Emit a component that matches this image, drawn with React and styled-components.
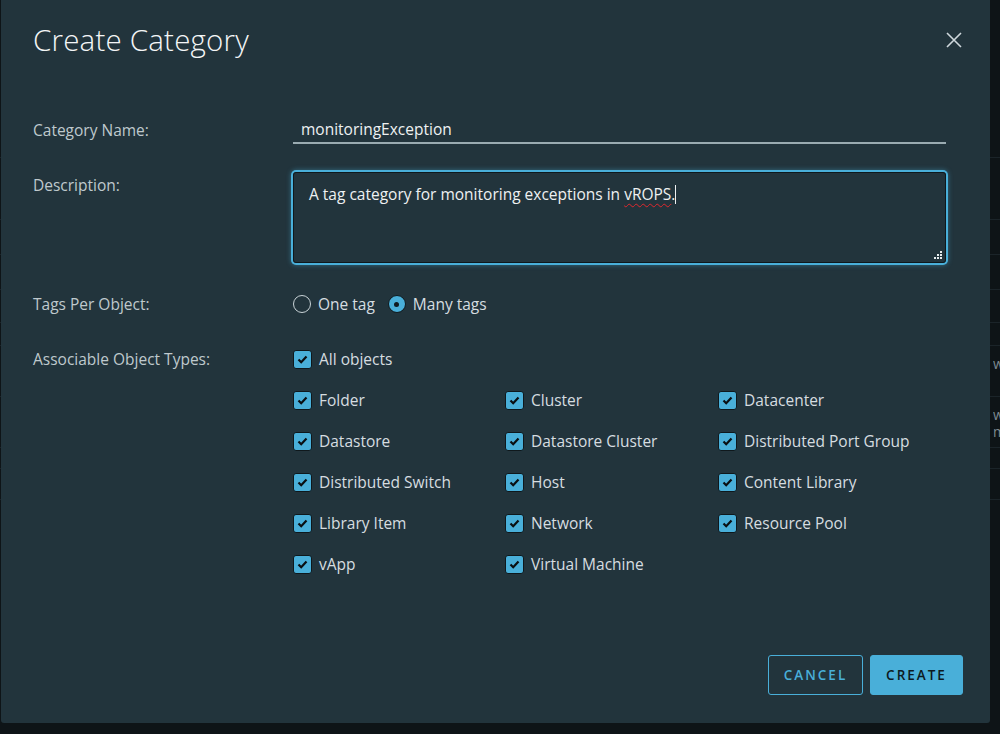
import React from 'react';
import styled, { createGlobalStyle } from 'styled-components';

const GlobalStyle = createGlobalStyle`
  html, body {
    margin: 0;
    padding: 0;
    background: #0e1417;
  }
  body {
    font-family: "Open Sans", "Noto Sans", sans-serif;
  }
`;

const Page = styled.div`
  position: relative;
  width: 1000px;
  height: 734px;
  overflow: hidden;
  background: #0e1417;
`;

const Backdrop = styled.div`
  display: flex;
  flex-direction: column;
  padding-top: 157px;
`;

const BackRow = styled.div`
  display: grid;
  grid-template-columns: 993px 1fr;
  height: ${props => props.h || 34}px;
  border-top: 1px solid #1b2429;
  color: #7d8a90;
  font-size: 14px;
  line-height: 17px;
  white-space: nowrap;
`;

const BackCell = styled.div`
  padding-top: 9px;
  overflow: hidden;
`;

const Modal = styled.div`
  position: absolute;
  left: 1px;
  top: 0;
  width: 989px;
  height: 723px;
  background: #22343c;
  border-radius: 0 0 3px 3px;
  display: flex;
  flex-direction: column;
  box-sizing: border-box;
`;

const Header = styled.div`
  display: flex;
  align-items: center;
  justify-content: space-between;
  padding: 20px 28px 0 32px;
`;

const Title = styled.h1`
  margin: 0;
  font-size: 29.5px;
  line-height: 40px;
  font-weight: 300;
  color: #f4f6f7;
  letter-spacing: 0.2px;
`;

const CloseButton = styled.button`
  background: none;
  border: none;
  padding: 0;
  width: 16px;
  height: 16px;
  cursor: pointer;
  display: flex;
`;

const Body = styled.div`
  display: flex;
  flex-direction: column;
  padding: 0 44px 0 32px;
`;

const FormRow = styled.div`
  display: flex;
  align-items: ${props => props.top ? 'flex-start' : 'center'};
  margin-top: ${props => props.mt}px;
`;

const Label = styled.label`
  width: 260px;
  flex: none;
  font-size: 15.5px;
  line-height: ${props => props.lh || 26}px;
  color: #bfc9cd;
`;

const TextInput = styled.div`
  flex: 1;
  height: 26px;
  line-height: 26px;
  padding-left: 8px;
  font-size: 15.5px;
  color: #eef1f2;
  border-bottom: 2px solid #9aabb1;
`;

const TextArea = styled.div`
  position: relative;
  flex: 1;
  height: 91px;
  box-sizing: border-box;
  border: 1px solid #0f181c;
  border-radius: 3px;
  box-shadow: 0 0 0 2px #49afd9, 0 0 5px 2px rgba(73, 175, 217, 0.45);
  padding: 8px 15px;
  font-size: 15.5px;
  line-height: 26px;
  color: #eef1f2;
`;

const Misspelled = styled.span`
  text-decoration: underline wavy #e0282e;
  text-decoration-thickness: 1px;
  text-underline-offset: 3px;
`;

const Caret = styled.span`
  display: inline-block;
  width: 1px;
  height: 19px;
  background: #eef1f2;
  vertical-align: -4px;
`;

const Grip = styled.svg`
  position: absolute;
  right: 3px;
  bottom: 3px;
`;

const Options = styled.div`
  display: flex;
  align-items: center;
  gap: 13px;
`;

const Choice = styled.div`
  display: flex;
  align-items: center;
  gap: 7px;
  height: 20px;
  font-size: 15.5px;
  color: #d6dde0;
  white-space: nowrap;
`;

const Radio = styled.span`
  width: 18px;
  height: 18px;
  box-sizing: border-box;
  border-radius: 50%;
  flex: none;
  display: flex;
  align-items: center;
  justify-content: center;
  border: ${props => props.checked ? '1px solid #0f181c' : '1.5px solid #c9d3d7'};
  background: ${props => props.checked ? '#49afd9' : 'transparent'};
  &::after {
    content: '';
    display: ${props => props.checked ? 'block' : 'none'};
    width: 5px;
    height: 5px;
    border-radius: 50%;
    background: #0f1a20;
  }
`;

const Box = styled.span`
  width: 19px;
  height: 19px;
  box-sizing: border-box;
  flex: none;
  border-radius: 3px;
  border: 1px solid #0f181c;
  background: #49afd9;
  display: flex;
  align-items: center;
  justify-content: center;
`;

const TypesColumn = styled.div`
  display: flex;
  flex-direction: column;
  gap: 21px;
`;

const TypesGrid = styled.div`
  display: grid;
  grid-template-columns: 212px 213px 1fr;
  row-gap: 21px;
`;

const Footer = styled.div`
  margin-top: auto;
  display: flex;
  justify-content: flex-end;
  gap: 7px;
  padding: 0 27px 28px 0;
`;

const Button = styled.button`
  height: 40px;
  box-sizing: border-box;
  padding: 0 14px;
  min-width: ${props => props.primary ? 93 : 95}px;
  border-radius: 3px;
  border: 1px solid #49afd9;
  background: ${props => props.primary ? '#49afd9' : 'transparent'};
  color: ${props => props.primary ? '#0d1a21' : '#49afd9'};
  font-family: "Open Sans", sans-serif;
  font-size: 13.5px;
  font-weight: 600;
  letter-spacing: 2px;
  cursor: pointer;
`;

const Check = () => (
  <Box>
    <svg width="11" height="9" viewBox="0 0 11 9">
      <path d="M1.5 4.5 L4.2 7.2 L9.5 1.5" fill="none" stroke="#0a0f12" strokeWidth="2.2" />
    </svg>
  </Box>
);

const types = [
  'Folder', 'Cluster', 'Datacenter',
  'Datastore', 'Datastore Cluster', 'Distributed Port Group',
  'Distributed Switch', 'Host', 'Content Library',
  'Library Item', 'Network', 'Resource Pool',
  'vApp', 'Virtual Machine',
];

const backRows = [
  { h: 61, t: [] }, { h: 34, t: [] }, { h: 34, t: [] }, { h: 32, t: [] },
  { h: 22, t: [] }, { h: 50, t: ['w'] }, { h: 50, t: ['w', 'm'] }, { h: 20, t: [] },
  { h: 30, t: [] }, { h: 40, t: [] },
];

function App() {
  return (
    <Page>
      <GlobalStyle />
      <Backdrop>
        {backRows.map((r, i) => (
          <BackRow key={i} h={r.h}>
            <span />
            <BackCell>
              {r.t.map(line => <div key={line}>{line}</div>)}
            </BackCell>
          </BackRow>
        ))}
      </Backdrop>

      <Modal>
        <Header>
          <Title>Create Category</Title>
          <CloseButton type="button" aria-label="Close">
            <svg width="16" height="16" viewBox="0 0 16 16">
              <path d="M1 1 L15 15 M15 1 L1 15" stroke="#cfd8dc" strokeWidth="1.6" fill="none" />
            </svg>
          </CloseButton>
        </Header>

        <Body>
          <FormRow mt={56}>
            <Label>Category Name:</Label>
            <TextInput>monitoringException</TextInput>
          </FormRow>

          <FormRow mt={28} top>
            <Label>Description:</Label>
            <TextArea>
              A tag category for monitoring exceptions in <Misspelled>vROPS</Misspelled>.<Caret />
              <Grip width="9" height="9" viewBox="0 0 9 9">
                <rect x="7" y="1" width="2" height="2" fill="#e6ecee" />
                <rect x="4" y="4" width="2" height="2" fill="#e6ecee" />
                <rect x="7" y="4" width="2" height="2" fill="#e6ecee" />
                <rect x="1" y="7" width="2" height="2" fill="#e6ecee" />
                <rect x="4" y="7" width="2" height="2" fill="#e6ecee" />
                <rect x="7" y="7" width="2" height="2" fill="#e6ecee" />
              </Grip>
            </TextArea>
          </FormRow>

          <FormRow mt={28}>
            <Label>Tags Per Object:</Label>
            <Options>
              <Choice><Radio />One tag</Choice>
              <Choice><Radio checked />Many tags</Choice>
            </Options>
          </FormRow>

          <FormRow mt={32} top>
            <Label lh={20}>Associable Object Types:</Label>
            <TypesColumn>
              <Choice><Check />All objects</Choice>
              <TypesGrid>
                {types.map(t => (
                  <Choice key={t}><Check />{t}</Choice>
                ))}
              </TypesGrid>
            </TypesColumn>
          </FormRow>
        </Body>

        <Footer>
          <Button type="button">CANCEL</Button>
          <Button type="button" primary>CREATE</Button>
        </Footer>
      </Modal>
    </Page>
  );
}

export default App;
